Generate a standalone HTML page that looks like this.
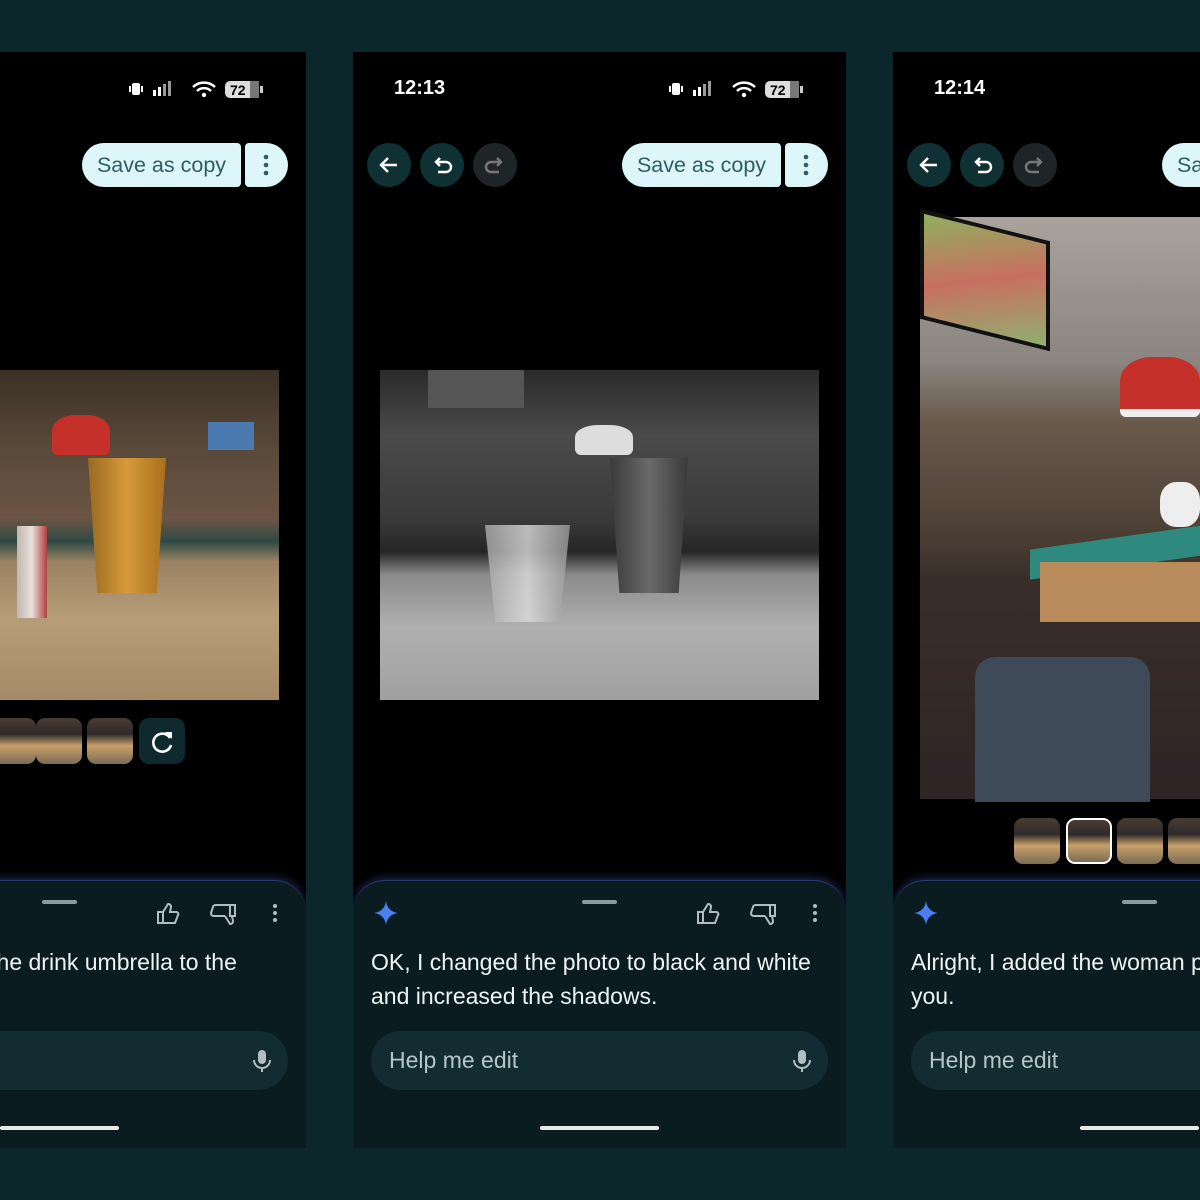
<!DOCTYPE html><html><head><meta charset="utf-8"><style>
*{margin:0;padding:0;box-sizing:border-box}
html{overflow:hidden;width:1200px;height:1200px}
body{width:1200px;height:1200px;overflow:hidden;background:#0c272b;position:relative;font-family:"Liberation Sans",sans-serif}
.ph{position:absolute;top:52px;height:1096px;background:#000;overflow:hidden}
.in{position:absolute;top:0;width:493px;height:1096px}
.a{position:absolute}
.time{left:41px;top:25px;color:#fff;font-size:20px;font-weight:bold}
.circ{width:44px;height:44px;border-radius:50%;background:#0f3134;top:91px}
.save{left:269px;top:91px;width:159px;height:44px;background:#dcf6f9;border-radius:22px 4px 4px 22px;color:#2d5d62;font-size:21.5px;line-height:44px;text-align:center}
.more{left:432px;top:91px;width:43px;height:44px;background:#dcf6f9;border-radius:4px 22px 22px 4px}
.sheet{left:0;top:828px;width:493px;height:280px;background:#0a1c20;border-radius:32px 32px 0 0;box-shadow:0 -3px 8px rgba(70,90,200,.35);border-top:1px solid #2a3a6a}
.msg{left:18px;top:893px;color:#eef3f4;font-size:23px;line-height:34px;white-space:nowrap}
.inp{left:18px;top:979px;width:457px;height:59px;background:#132c31;border-radius:30px;color:#b4c6ca;font-size:23px;line-height:59px;padding-left:18px}
.home{left:187px;top:1074px;width:119px;height:4px;border-radius:2px;background:#e6eaeb}
.handle{left:229px;top:848px;width:35px;height:4px;border-radius:2px;background:#8a9a9d}
.th{width:46px;height:46px;border-radius:9px;background:linear-gradient(#4a3c33 0,#2e2a2a 35%,#c9a06a 60%,#7a6c55 100%)}
</style></head><body>

<div class="ph" style="left:0;width:306px"><div class="in" style="left:-187px">
 <div class="a" style="left:316px;top:27px"><svg width="140" height="20"><rect x="3" y="4" width="8" height="12" rx="2" fill="#fff"/><rect x="0" y="7" width="2" height="6" fill="#fff"/><rect x="12" y="7" width="2" height="6" fill="#fff"/><rect x="24" y="11" width="3" height="6" fill="#fff"/><rect x="29" y="8" width="3" height="9" fill="#fff"/><rect x="34" y="5" width="3" height="12" fill="#999"/><rect x="39" y="2" width="3" height="15" fill="#999"/><path d="M64 8a16 16 0 0 1 22 0M68 12a10 10 0 0 1 14 0" stroke="#fff" stroke-width="2.5" fill="none"/><circle cx="75" cy="16" r="2.2" fill="#fff"/><rect x="96" y="2" width="34" height="17" rx="5" fill="#ddd"/><rect x="121" y="2" width="9" height="17" fill="#777"/><rect x="131" y="7" width="3" height="7" fill="#ccc"/><text x="101" y="16" font-size="14" font-family="Liberation Sans" font-weight="bold" fill="#000">72</text></svg></div>
 <div class="a save">Save as copy</div>
 <div class="a more"><svg width="43" height="44"><circle cx="21" cy="14" r="2.3" fill="#2d5d62"/><circle cx="21" cy="22" r="2.3" fill="#2d5d62"/><circle cx="21" cy="30" r="2.3" fill="#2d5d62"/></svg></div>
 <div class="a" style="left:27px;top:318px;width:439px;height:330px;background:linear-gradient(180deg,#3b3026 0%,#5a4a3b 25%,#6b5544 45%,#2f4a45 52%,#9a8262 58%,#b79d78 75%,#a58a67 100%)">
  <div class="a" style="left:248px;top:88px;width:78px;height:135px;background:linear-gradient(90deg,#9a6a20,#d69a3a,#a8701f);clip-path:polygon(0 0,100% 0,88% 100%,12% 100%)"></div>
  <div class="a" style="left:212px;top:45px;width:58px;height:40px;background:#c5312a;border-radius:40% 40% 6px 6px"></div>
  <div class="a" style="left:368px;top:52px;width:46px;height:28px;background:#4a7ab0"></div>
  <div class="a" style="left:177px;top:156px;width:30px;height:92px;background:linear-gradient(90deg,#c0b8b0,#e8e0da,#b04040)"></div>
 </div>
 <div class="a th" style="left:177px;top:666px"></div><div class="a th" style="left:223px;top:666px"></div><div class="a th" style="left:274px;top:666px"></div>
 <div class="a" style="left:326px;top:666px;width:46px;height:46px;border-radius:10px;background:#0f2a2e"><svg width="46" height="46"><path d="M31 20a9 9 0 1 0 1 7" stroke="#fff" stroke-width="2.6" fill="none"/><path d="M26 14h7v7z" fill="#fff"/></svg></div>
 <div class="a sheet"></div><div class="a handle"></div>
 <div class="a" style="left:340px;top:848px"><svg width="140" height="28"><path d="M5 12h5v11H5zM10 12l5-8c2 0 3 1 3 3l-1 5h6c2 0 3 2 2 3l-3 8H10" stroke="#b0bec1" stroke-width="2" fill="none"/><path d="M77 16h5V5h-5zM72 16l5 8c2 0 3-1 3-3l-1-5" stroke="#b0bec1" stroke-width="2" fill="none"/><path d="M77 5H63c-2 0-3 1-3 2l-2 6c0 2 1 3 3 3h11" stroke="#b0bec1" stroke-width="2" fill="none"/><circle cx="122" cy="6" r="2" fill="#b0bec1"/><circle cx="122" cy="13" r="2" fill="#b0bec1"/><circle cx="122" cy="20" r="2" fill="#b0bec1"/></svg></div>
 <div class="a msg" style="left:48px">OK, I added the drink umbrella to the</div>
 <div class="a inp">Help me edit</div>
 <div class="a" style="left:439px;top:997px"><svg width="20" height="24"><rect x="6" y="1" width="8" height="14" rx="4" fill="#b0bec1"/><path d="M2 11a8 8 0 0 0 16 0M10 19v4" stroke="#b0bec1" stroke-width="2" fill="none"/></svg></div>
 <div class="a home"></div>
</div></div>

<div class="ph" style="left:353px;width:493px"><div class="in" style="left:0">
 <div class="a time">12:13</div>
 <div class="a" style="left:316px;top:27px"><svg width="140" height="20"><rect x="3" y="4" width="8" height="12" rx="2" fill="#fff"/><rect x="0" y="7" width="2" height="6" fill="#fff"/><rect x="12" y="7" width="2" height="6" fill="#fff"/><rect x="24" y="11" width="3" height="6" fill="#fff"/><rect x="29" y="8" width="3" height="9" fill="#fff"/><rect x="34" y="5" width="3" height="12" fill="#999"/><rect x="39" y="2" width="3" height="15" fill="#999"/><path d="M64 8a16 16 0 0 1 22 0M68 12a10 10 0 0 1 14 0" stroke="#fff" stroke-width="2.5" fill="none"/><circle cx="75" cy="16" r="2.2" fill="#fff"/><rect x="96" y="2" width="34" height="17" rx="5" fill="#ddd"/><rect x="121" y="2" width="9" height="17" fill="#777"/><rect x="131" y="7" width="3" height="7" fill="#ccc"/><text x="101" y="16" font-size="14" font-family="Liberation Sans" font-weight="bold" fill="#000">72</text></svg></div>
 <div class="a circ" style="left:14px"><svg width="44" height="44"><path d="M30 22H15M21 15l-7 7 7 7" stroke="#fff" stroke-width="2.4" fill="none"/></svg></div>
 <div class="a circ" style="left:67px"><svg width="44" height="44"><path d="M17 19h9a5 5 0 0 1 0 10h-8M20 15l-4 4 4 4" stroke="#fff" stroke-width="2.4" fill="none"/></svg></div>
 <div class="a circ" style="left:120px;background:#1d2526"><svg width="44" height="44"><path d="M27 19h-9a5 5 0 0 0 0 10h8M24 15l4 4-4 4" stroke="#777" stroke-width="2.4" fill="none"/></svg></div>
 <div class="a save">Save as copy</div>
 <div class="a more"><svg width="43" height="44"><circle cx="21" cy="14" r="2.3" fill="#2d5d62"/><circle cx="21" cy="22" r="2.3" fill="#2d5d62"/><circle cx="21" cy="30" r="2.3" fill="#2d5d62"/></svg></div>
 <div class="a" style="left:27px;top:318px;width:439px;height:330px;background:linear-gradient(180deg,#2a2a2a 0%,#4a4a4a 20%,#3a3a3a 45%,#252525 55%,#8a8a8a 62%,#b0b0b0 78%,#a0a0a0 100%)">
  <div class="a" style="left:230px;top:88px;width:78px;height:135px;background:linear-gradient(90deg,#3a3a3a,#6a6a6a,#3a3a3a);clip-path:polygon(0 0,100% 0,88% 100%,12% 100%)"></div>
  <div class="a" style="left:105px;top:155px;width:85px;height:97px;background:linear-gradient(90deg,#aaa,#ddd,#999);clip-path:polygon(0 0,100% 0,88% 100%,12% 100%);opacity:.8"></div>
  <div class="a" style="left:195px;top:55px;width:58px;height:30px;background:#ddd;border-radius:40% 40% 6px 6px"></div>
  <div class="a" style="left:48px;top:0;width:96px;height:38px;background:#555"></div>
 </div>
 <div class="a sheet"></div><div class="a handle"></div>
 <div class="a" style="left:21px;top:849px"><svg width="24" height="24"><path d="M12 0C13 7 17 11 24 12 17 13 13 17 12 24 11 17 7 13 0 12 7 11 11 7 12 0Z" fill="#4b7ff0"/></svg></div>
 <div class="a" style="left:340px;top:848px"><svg width="140" height="28"><path d="M5 12h5v11H5zM10 12l5-8c2 0 3 1 3 3l-1 5h6c2 0 3 2 2 3l-3 8H10" stroke="#b0bec1" stroke-width="2" fill="none"/><path d="M77 16h5V5h-5zM72 16l5 8c2 0 3-1 3-3l-1-5" stroke="#b0bec1" stroke-width="2" fill="none"/><path d="M77 5H63c-2 0-3 1-3 2l-2 6c0 2 1 3 3 3h11" stroke="#b0bec1" stroke-width="2" fill="none"/><circle cx="122" cy="6" r="2" fill="#b0bec1"/><circle cx="122" cy="13" r="2" fill="#b0bec1"/><circle cx="122" cy="20" r="2" fill="#b0bec1"/></svg></div>
 <div class="a msg">OK, I changed the photo to black and white<br>and increased the shadows.</div>
 <div class="a inp">Help me edit</div>
 <div class="a" style="left:439px;top:997px"><svg width="20" height="24"><rect x="6" y="1" width="8" height="14" rx="4" fill="#b0bec1"/><path d="M2 11a8 8 0 0 0 16 0M10 19v4" stroke="#b0bec1" stroke-width="2" fill="none"/></svg></div>
 <div class="a home"></div>
</div></div>

<div class="ph" style="left:893px;width:307px"><div class="in" style="left:0">
 <div class="a time">12:14</div>
 <div class="a circ" style="left:14px"><svg width="44" height="44"><path d="M30 22H15M21 15l-7 7 7 7" stroke="#fff" stroke-width="2.4" fill="none"/></svg></div>
 <div class="a circ" style="left:67px"><svg width="44" height="44"><path d="M17 19h9a5 5 0 0 1 0 10h-8M20 15l-4 4 4 4" stroke="#fff" stroke-width="2.4" fill="none"/></svg></div>
 <div class="a circ" style="left:120px;background:#1d2526"><svg width="44" height="44"><path d="M27 19h-9a5 5 0 0 0 0 10h8M24 15l4 4-4 4" stroke="#777" stroke-width="2.4" fill="none"/></svg></div>
 <div class="a save">Save as copy</div>
 <div class="a" style="left:27px;top:165px;width:439px;height:582px;background:linear-gradient(180deg,#aaa39c 0%,#8a8580 25%,#6a5a4c 35%,#4a3e34 55%,#3a2e2a 62%,#2e2524 100%)">
  <div class="a" style="left:0;top:8px;width:130px;height:110px;background:linear-gradient(160deg,#8fb060,#c87060 50%,#90b070);transform:skewY(14deg);border:4px solid #111"></div>
  <div class="a" style="left:200px;top:140px;width:80px;height:60px;background:#c5312a;border-radius:40% 40% 6px 6px;border-bottom:8px solid #eee"></div>
  <div class="a" style="left:110px;top:320px;width:180px;height:30px;background:#2e8a7e;transform:skewY(-8deg)"></div>
  <div class="a" style="left:120px;top:345px;width:180px;height:60px;background:#b98a5a"></div>
  <div class="a" style="left:55px;top:440px;width:175px;height:145px;background:#3e4a58;border-radius:20px 20px 0 0"></div>
  <div class="a" style="left:240px;top:265px;width:40px;height:45px;background:#eee;border-radius:40%"></div>
 </div>
 <div class="a th" style="left:121px;top:766px"></div>
 <div class="a th" style="left:173px;top:766px;border:2px solid #fff"></div>
 <div class="a th" style="left:224px;top:766px"></div><div class="a th" style="left:275px;top:766px"></div>
 <div class="a sheet"></div><div class="a handle"></div>
 <div class="a" style="left:21px;top:849px"><svg width="24" height="24"><path d="M12 0C13 7 17 11 24 12 17 13 13 17 12 24 11 17 7 13 0 12 7 11 11 7 12 0Z" fill="#4b7ff0"/></svg></div>
 <div class="a msg">Alright, I added the woman playing pool<br>you.</div>
 <div class="a inp">Help me edit</div>
 <div class="a home"></div>
</div></div>
</body></html>
